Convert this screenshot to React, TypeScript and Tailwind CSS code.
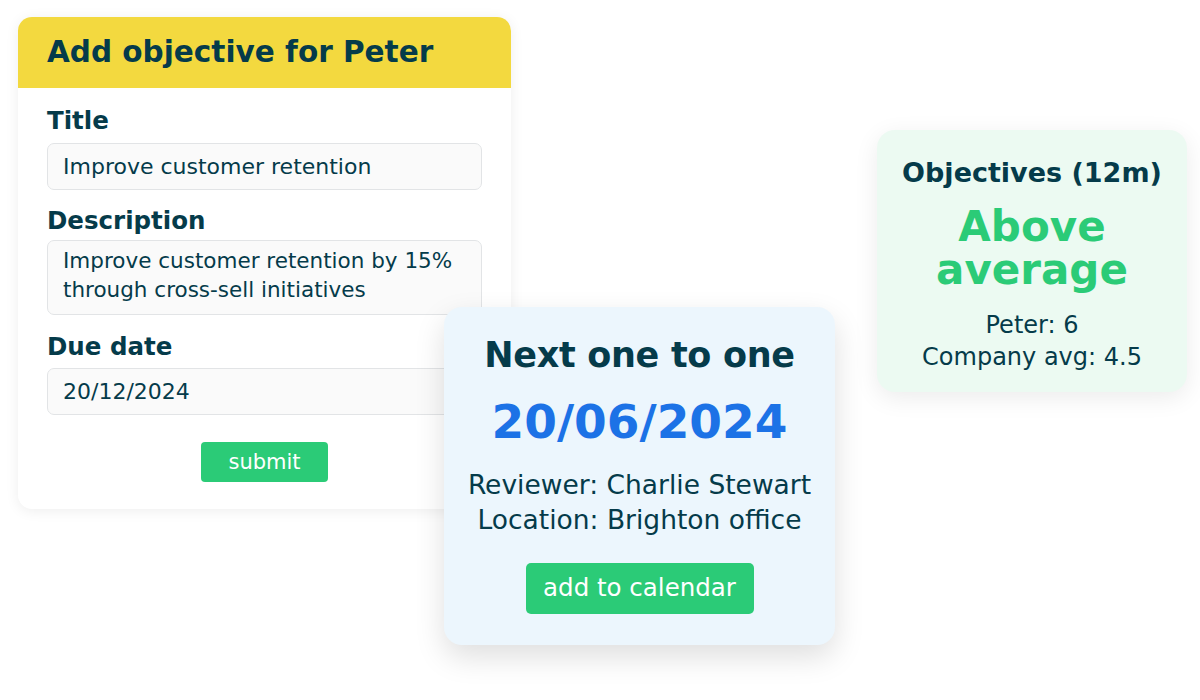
import React from "react";

const font = { fontFamily: "'DejaVu Sans', sans-serif" };

export default function App() {
  return (
    <div className="relative w-[1200px] h-[700px] bg-white overflow-hidden text-[#053b4a]" style={font}>
      {/* Card 1: add objective */}
      <div className="absolute left-[18px] top-[17px] w-[493px] h-[492px] bg-white rounded-[14px] shadow-[0_2px_14px_rgba(0,0,0,0.07)] overflow-hidden">
        <div className="h-[71px] bg-[#f3d93f] flex items-center px-[29px]">
          <h1 className="text-[29.5px] font-bold">Add objective for Peter</h1>
        </div>
        <div className="px-[29px] pt-[18px] flex flex-col">
          <label className="text-[24.5px] font-bold leading-[30px]">Title</label>
          <div className="mt-[7px] h-[47px] rounded-[7px] border border-[#e2e4e6] bg-[#fafafa] flex items-center px-[15px] text-[22px]">
            Improve customer retention
          </div>
          <label className="mt-[16px] text-[24.5px] font-bold leading-[30px]">Description</label>
          <div className="mt-[4px] h-[75px] rounded-[7px] border border-[#e2e4e6] bg-[#fafafa] px-[15px] pt-[5px] text-[21.5px] leading-[29px]">
            Improve customer retention by 15%<br />through cross-sell initiatives
          </div>
          <label className="mt-[17px] text-[24.5px] font-bold leading-[30px]">Due date</label>
          <div className="mt-[6px] h-[47px] rounded-[7px] border border-[#e2e4e6] bg-[#fafafa] flex items-center px-[15px] text-[22px]">
            20/12/2024
          </div>
          <div className="mt-[27px] flex justify-center">
            <button className="w-[127px] h-[40px] rounded-[4px] bg-[#2bcb77] text-white text-[21px] leading-none">submit</button>
          </div>
        </div>
      </div>

      {/* Card 2: next one to one */}
      <div className="absolute left-[444px] top-[307px] w-[391px] h-[338px] bg-[#ecf6fd] rounded-[18px] shadow-[0_12px_30px_rgba(0,0,0,0.13)] flex flex-col items-center pt-[26px]">
        <h2 className="text-[35px] font-bold leading-[44px] tracking-[-0.3px]">Next one to one</h2>
        <div className="mt-[18px] text-[47px] font-bold leading-[54px] text-[#1c72e6]">20/06/2024</div>
        <div className="mt-[18px] text-[26.5px] leading-[35px] text-center">
          <div>Reviewer: Charlie Stewart</div>
          <div>Location: Brighton office</div>
        </div>
        <button className="mt-[26px] w-[228px] h-[51px] rounded-[5px] bg-[#2bcb77] text-white text-[24.5px] leading-none">add to calendar</button>
      </div>

      {/* Card 3: objectives */}
      <div className="absolute left-[877px] top-[130px] w-[310px] h-[262px] bg-[#ecfaf2] rounded-[18px] shadow-[0_6px_24px_rgba(0,0,0,0.08)] flex flex-col items-center pt-[25px]">
        <h3 className="text-[27px] font-bold leading-[36px]">Objectives (12m)</h3>
        <div className="mt-[14px] text-[42px] font-bold leading-[43px] text-[#2bcb77] text-center">
          <div>Above</div>
          <div>average</div>
        </div>
        <div className="mt-[18px] text-[24px] leading-[32px] text-center">
          <div>Peter: 6</div>
          <div>Company avg: 4.5</div>
        </div>
      </div>
    </div>
  );
}
